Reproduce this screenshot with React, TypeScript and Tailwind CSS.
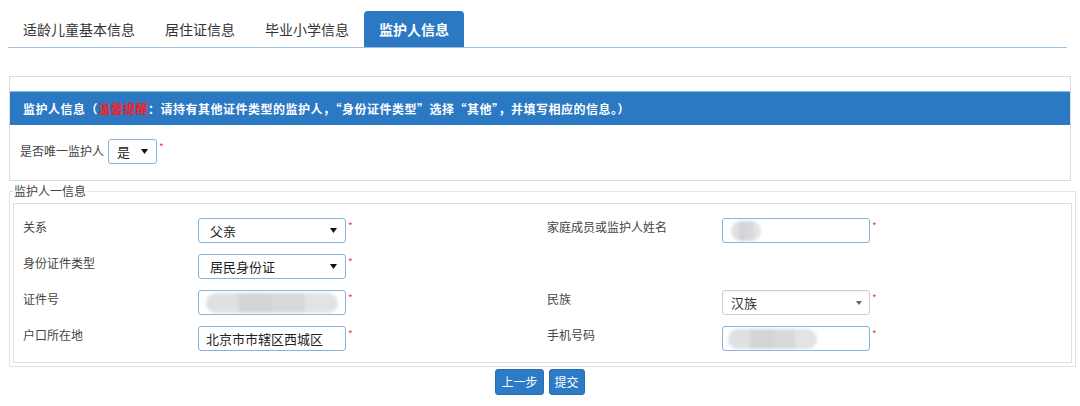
const tabs = ['适龄儿童基本信息', '居住证信息', '毕业小学信息', '监护人信息']

function Star() {
  return <span className="ml-[2px] mt-[3px] text-[10px] leading-none text-[#f23c3c]">*</span>
}

function Arrow() {
  return (
    <svg width="7" height="5" viewBox="0 0 7 5" className="shrink-0">
      <path d="M0 0 L7 0 L3.5 5 Z" fill="#111" />
    </svg>
  )
}

function Blob({ width, ml }: { width: number; ml: number }) {
  return (
    <div className="flex h-[20px] overflow-hidden rounded-full blur-[1.5px]" style={{ width, marginLeft: ml }}>
      <div className="h-full w-1/4 bg-[#dfe0e3]" />
      <div className="h-full w-1/4 bg-[#d3d4d7]" />
      <div className="h-full w-1/4 bg-[#d8d9dc]" />
      <div className="h-full w-1/4 bg-[#e2e3e6]" />
    </div>
  )
}

function Field({ label, children }: { label?: string; children?: React.ReactNode }) {
  return (
    <div className="flex w-[524px] items-start">
      <div className="w-[175px] text-[12px] leading-[18px] text-[#444]">{label}</div>
      {children}
    </div>
  )
}

function NativeSelect({ value }: { value: string }) {
  return (
    <>
      <div className="flex h-[25px] w-[148px] items-center justify-between rounded-[3px] border border-[#8ab2de] pl-[11px] pr-[8px] text-[13px] text-[#222]">
        <span>{value}</span>
        <Arrow />
      </div>
      <Star />
    </>
  )
}

function TextBox({ children }: { children?: React.ReactNode }) {
  return (
    <>
      <div className="flex h-[25px] w-[148px] items-center rounded-[3px] border border-[#8ab2de] pl-[7px] text-[13px] text-[#222]">
        {children}
      </div>
      <Star />
    </>
  )
}

export default function App() {
  return (
    <div className="h-[406px] w-[1080px] overflow-hidden bg-white font-['Noto_Sans_CJK_SC','Noto_Sans',sans-serif] text-[#333]">
      {/* tabs */}
      <div className="pl-[8px] pr-[13px] pt-[11px]">
        <div className="flex h-[37px] border-b border-[#9ec0e6]">
          {tabs.map((t, i) =>
            i === 3 ? (
              <div key={t} className="flex h-[36px] items-center rounded-t-[4px] bg-[#2b78c3] px-[15px] text-[14px] font-bold text-white">
                {t}
              </div>
            ) : (
              <div key={t} className="flex h-[36px] items-center px-[15px] text-[14px] text-[#333]">
                {t}
              </div>
            )
          )}
        </div>
      </div>

      {/* guardian panel */}
      <div className="mx-[9px] mt-[28px] border border-[#dcdcdc] pt-[14px]">
        <div className="flex h-[34px] items-center border-t border-[#8ab6e3] bg-[#2b78c3] pl-[13px] text-[12px] font-bold tracking-[0.5px] text-white">
          监护人信息（<span className="text-[#ff1a1a]">温馨提醒</span>：请持有其他证件类型的监护人，“身份证件类型”选择“其他”，并填写相应的信息。）
        </div>
        <div className="flex items-start pb-[16px] pl-[10px] pt-[14px]">
          <span className="mt-[3px] text-[12px] leading-[18px] text-[#444]">是否唯一监护人</span>
          <div className="ml-[4px] flex h-[25px] w-[49px] items-center justify-between rounded-[3px] border border-[#8ab2de] pl-[8px] pr-[8px] text-[13px] text-[#222]">
            <span>是</span>
            <Arrow />
          </div>
          <Star />
        </div>
      </div>

      {/* guardian one */}
      <fieldset className="mx-[9px] mt-[2px] border border-[#e3e3e3] px-[3px] pb-[3px] pt-[4px]">
        <legend className="px-[1px] text-[12px] leading-[16px] text-[#444]">监护人一信息</legend>
        <div className="grid grid-cols-[524px_524px] gap-y-[11px] border border-[#dedede] pb-[11px] pl-[9px] pt-[14px]">
          <Field label="关系">
            <NativeSelect value="父亲" />
          </Field>
          <Field label="家庭成员或监护人姓名">
            <TextBox>
              <Blob width={30} ml={1} />
            </TextBox>
          </Field>
          <Field label="身份证件类型">
            <NativeSelect value="居民身份证" />
          </Field>
          <Field />
          <Field label="证件号">
            <TextBox>
              <Blob width={132} ml={0} />
            </TextBox>
          </Field>
          <Field label="民族">
            <div className="flex h-[25px] w-[148px] items-center justify-between rounded-[3px] border border-[#cfcfcf] pl-[8px] pr-[7px] text-[13px] text-[#333] shadow-[inset_0_1px_1px_rgba(0,0,0,0.05)]">
              <span>汉族</span>
              <svg width="6" height="4" viewBox="0 0 6 4">
                <path d="M0 0 L6 0 L3 4 Z" fill="#666" />
              </svg>
            </div>
            <Star />
          </Field>
          <Field label="户口所在地">
            <TextBox>北京市市辖区西城区</TextBox>
          </Field>
          <Field label="手机号码">
            <TextBox>
              <Blob width={89} ml={-2} />
            </TextBox>
          </Field>
        </div>
      </fieldset>

      {/* actions */}
      <div className="mx-[9px] mt-[2px] flex justify-center gap-[5px]">
        <button className="h-[26px] rounded-[3px] border border-[#2a6db0] bg-[#2d7ac5] px-[5px] text-[12px] text-white">上一步</button>
        <button className="h-[26px] rounded-[3px] border border-[#2a6db0] bg-[#2d7ac5] px-[5px] text-[12px] text-white">提交</button>
      </div>
    </div>
  )
}
